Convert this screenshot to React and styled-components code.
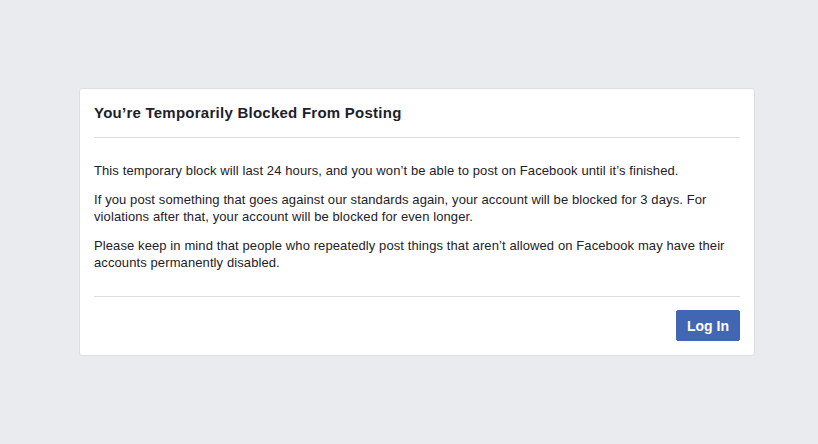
import React from "react";
import styled, { createGlobalStyle } from "styled-components";

const GlobalStyle = createGlobalStyle`
  html, body {
    margin: 0;
    padding: 0;
    background: #e9ebee;
  }
  body {
    font-family: "Liberation Sans", Arial, Helvetica, sans-serif;
    color: #1d2129;
  }
`;

const Page = styled.main`
  min-height: 100vh;
  box-sizing: border-box;
  padding: 88px 0 0 79px;
  background: #e9ebee;
`;

const Card = styled.section`
  width: 676px;
  box-sizing: border-box;
  background: #fff;
  border: 1px solid #dddfe2;
  border-radius: 3px;
  display: flex;
  flex-direction: column;
`;

const Header = styled.header`
  margin: 0 14px;
  padding: 14px 0;
  border-bottom: 1px solid #dadde1;
`;

const Title = styled.h2`
  margin: 0;
  font-size: 15px;
  line-height: 20px;
  font-weight: bold;
  letter-spacing: 0.25px;
  color: #1d2129;
`;

const Body = styled.div`
  margin: 0 14px;
  padding: 24px 0 25px;
  border-bottom: 1px solid #dadde1;
`;

const Text = styled.p`
  margin: 0 0 12px;
  font-size: 13px;
  line-height: 17px;
  letter-spacing: 0.1px;
  color: #1d2129;

  &:last-child {
    margin-bottom: 0;
  }
`;

const Footer = styled.footer`
  display: flex;
  justify-content: flex-end;
  padding: 13px 14px 14px;
`;

const Button = styled.button`
  height: 31px;
  padding: 0 10px;
  border: 1px solid ${(p) => (p.$primary ? "#4267b2" : "#ccd0d5")};
  border-radius: 2px;
  background: ${(p) => (p.$primary ? "#4267b2" : "#f5f6f7")};
  color: ${(p) => (p.$primary ? "#fff" : "#4b4f56")};
  font-family: inherit;
  font-size: 14px;
  font-weight: bold;
  cursor: pointer;
`;

const title = "You\u2019re Temporarily Blocked From Posting";

const paragraphs = [
  "This temporary block will last 24 hours, and you won\u2019t be able to post on Facebook until it\u2019s finished.",
  "If you post something that goes against our standards again, your account will be blocked for 3 days. For violations after that, your account will be blocked for even longer.",
  "Please keep in mind that people who repeatedly post things that aren\u2019t allowed on Facebook may have their accounts permanently disabled.",
];

export default function App() {
  return (
    <>
      <GlobalStyle />
      <Page>
        <Card>
          <Header>
            <Title>{title}</Title>
          </Header>
          <Body>
            {paragraphs.map((t, i) => (
              <Text key={i}>{t}</Text>
            ))}
          </Body>
          <Footer>
            <Button $primary>Log In</Button>
          </Footer>
        </Card>
      </Page>
    </>
  );
}
